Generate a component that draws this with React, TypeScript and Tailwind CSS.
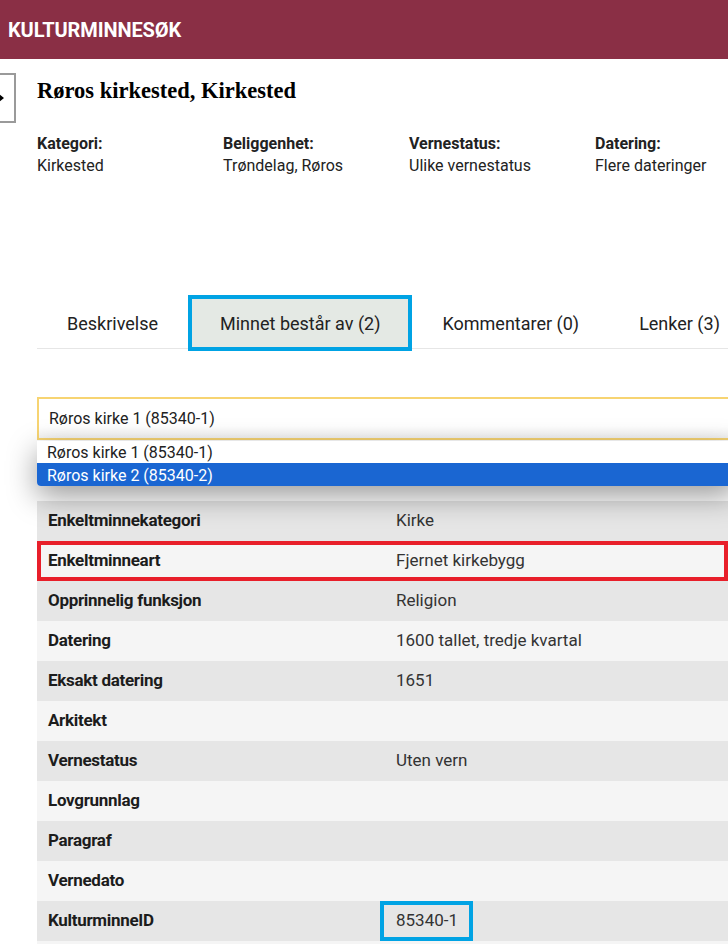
import React from 'react'

const facts = [
  { label: 'Kategori:', value: 'Kirkested' },
  { label: 'Beliggenhet:', value: 'Trøndelag, Røros' },
  { label: 'Vernestatus:', value: 'Ulike vernestatus' },
  { label: 'Datering:', value: 'Flere dateringer' },
]

const tabs = ['Beskrivelse', 'Minnet består av (2)', 'Kommentarer (0)', 'Lenker (3)']

const rows = [
  { label: 'Enkeltminnekategori', value: 'Kirke' },
  { label: 'Enkeltminneart', value: 'Fjernet kirkebygg', mark: 'row' },
  { label: 'Opprinnelig funksjon', value: 'Religion' },
  { label: 'Datering', value: '1600 tallet, tredje kvartal' },
  { label: 'Eksakt datering', value: '1651' },
  { label: 'Arkitekt', value: '' },
  { label: 'Vernestatus', value: 'Uten vern' },
  { label: 'Lovgrunnlag', value: '' },
  { label: 'Paragraf', value: '' },
  { label: 'Vernedato', value: '' },
  { label: 'KulturminneID', value: '85340-1', mark: 'value' },
  { label: '', value: '' },
]

export default function App() {
  return (
    <div className="relative w-[728px] h-[944px] overflow-hidden bg-white font-['Roboto',sans-serif] text-[#222]">
      {/* Header */}
      <div className="h-[59px] bg-[#8a2f45] flex items-center pl-2">
        <span className="text-white font-bold text-[20px] tracking-[-0.1px]">KULTURMINNESØK</span>
      </div>

      {/* Side toggle */}
      <div className="absolute left-[-34px] top-[73px] w-[50px] h-[50px] border-2 border-[#9a9a9a] bg-white flex items-center justify-end pr-[10px]">
        <svg width="8" height="10" viewBox="0 0 8 10">
          <path d="M1 1 L6 5 L1 9" fill="none" stroke="#000" strokeWidth="2.6" />
        </svg>
      </div>

      <div className="pl-[37px] w-[800px]">
        <h1 className="mt-[17px] h-[30px] font-['Liberation_Serif',serif] font-bold text-[22.5px] leading-[30px] text-black">
          Røros kirkested, Kirkested
        </h1>

        <div className="mt-[27px] flex">
          {facts.map((f) => (
            <div key={f.label} className="w-[186px] text-[16px] leading-[22px]">
              <div className="font-bold">{f.label}</div>
              <div>{f.value}</div>
            </div>
          ))}
        </div>

        {/* Tabs */}
        <div className="mt-[118px] flex border-b border-[#e6e6e6] h-[54px]">
          {tabs.map((t, i) => (
            <div
              key={t}
              className={
                i === 1
                  ? 'h-[56px] px-[28px] flex items-center text-[18px] bg-[#e4e9e4] border-4 border-[#00a3e4]'
                  : 'h-[56px] px-[30px] flex items-center text-[18px]'
              }
            >
              {t}
            </div>
          ))}
        </div>

        {/* Select */}
        <div className="mt-[48px] w-[700px] h-[43px] border-2 border-[#f7d472] bg-gradient-to-b from-white from-[70%] to-[#f4f4f4] flex items-center pl-[10px] pt-[1px] text-[16px]">
          Røros kirke 1 (85340-1)
        </div>
        <div className="relative z-10 mt-[1px] w-[700px] rounded-b-[4px] overflow-hidden bg-white shadow-[0_10px_30px_rgba(0,0,0,0.4)] text-[16px]">
          <div className="h-[22px] leading-[24px] pl-[10px]">Røros kirke 1 (85340-1)</div>
          <div className="h-[23px] leading-[25px] pl-[10px] bg-[#1a66d2] text-white">Røros kirke 2 (85340-2)</div>
        </div>

        {/* Table */}
        <div className="mt-[15px] w-[691px] text-[17px]">
          {rows.map((r, i) => (
            <div
              key={i}
              className={
                'relative h-[40px] flex items-center ' +
                (i % 2 === 0 ? 'bg-[#e6e6e6]' : 'bg-[#f5f5f5]') +
                (r.mark === 'row' ? ' outline-4 -outline-offset-4 outline-[#e81f2a]' : '')
              }
            >
              <div className="w-[359px] pl-[11px] font-bold text-[#1c1c1c] tracking-[-0.3px]">{r.label}</div>
              {r.mark === 'value' ? (
                <div className="-ml-[16px] h-[40px] w-[93px] border-4 border-[#00a3e4] flex items-center pl-[12px] text-[#333]">
                  {r.value}
                </div>
              ) : (
                <div className="text-[#333]">{r.value}</div>
              )}
            </div>
          ))}
        </div>
      </div>
    </div>
  )
}
